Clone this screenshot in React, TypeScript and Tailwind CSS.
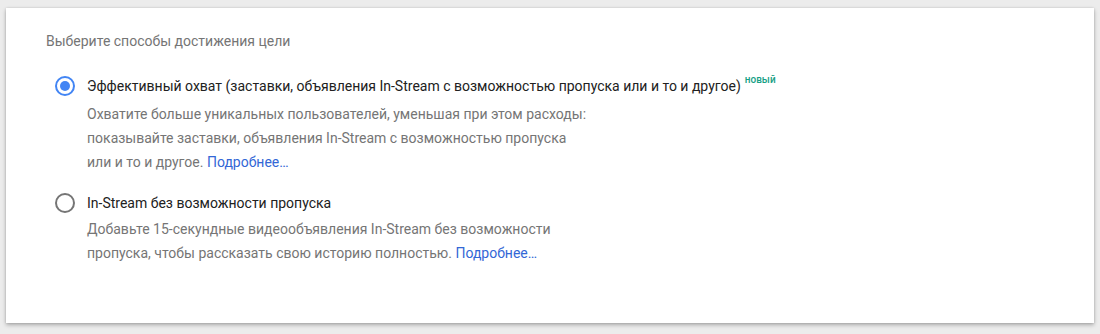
export default function App() {
  return (
    <main
      className="h-[334px] w-[1100px] bg-[#ececec] pt-[8px] pl-[6px] pr-[6px] overflow-hidden"
      style={{ fontFamily: "Roboto, 'Noto Sans', Arial, sans-serif" }}
    >
      <div className="h-[315px] bg-white shadow-[0_2px_4px_rgba(0,0,0,0.28),0_0_2px_rgba(0,0,0,0.12)] pl-[40px] pt-[23px]">
        <h2 className="text-[14px] leading-[20px] text-[#757575]">Выберите способы достижения цели</h2>

        <div className="mt-[23px] flex gap-[12px] pl-[9px]">
          <div className="mt-[2px] flex h-[20px] w-[20px] shrink-0 items-center justify-center rounded-full border-2 border-[#4285f4]">
            <div className="h-[10px] w-[10px] rounded-full bg-[#4285f4]" />
          </div>
          <div>
            <div className="text-[14px] leading-[24px] text-[#212121]">
              Эффективный охват (заставки, объявления In-Stream с возможностью пропуска или и то и другое)
              <sup className="ml-[4px] text-[10px] font-medium text-[#16a085] relative -top-[8px]">новый</sup>
            </div>
            <p className="mt-[4px] max-w-[500px] text-[14px] leading-[24px] text-[#757575]">
              Охватите больше уникальных пользователей, уменьшая при этом расходы: показывайте заставки, объявления In-Stream с возможностью пропуска или и то и другое.{" "}
              <a className="text-[#3367d6]">Подробнее…</a>
            </p>
          </div>
        </div>

        <div className="mt-[17px] flex gap-[12px] pl-[9px]">
          <div className="mt-[2px] h-[20px] w-[20px] shrink-0 rounded-full border-2 border-[#757575]" />
          <div>
            <div className="text-[14px] leading-[24px] text-[#212121]">In-Stream без возможности пропуска</div>
            <p className="mt-[2px] max-w-[500px] text-[14px] leading-[24px] text-[#757575]">
              Добавьте 15-секундные видеообъявления In-Stream без возможности пропуска, чтобы рассказать свою историю полностью.{" "}
              <a className="text-[#3367d6]">Подробнее…</a>
            </p>
          </div>
        </div>
      </div>
    </main>
  );
}
